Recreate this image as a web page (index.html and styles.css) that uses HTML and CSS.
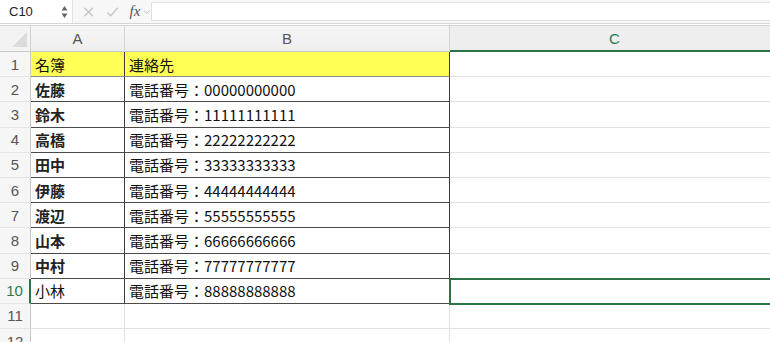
FILE: index.html
```html
<!DOCTYPE html>
<html lang="ja">
<head>
	<meta charset="UTF-8">
	<title>名簿</title>
	<link rel="stylesheet" href="styles.css">
</head>
<body>
	<!-- 数式バー -->
	<div class="bar">
		<div class="namebox">
			<span class="namebox-ref">C10</span>
			<span class="namebox-spin">
				<svg width="7" height="14" viewBox="0 0 7 14"><path d="M3.5 1 L6.5 5.5 L0.5 5.5 Z M3.5 13 L6.5 8.5 L0.5 8.5 Z" fill="#666"/></svg>
			</span>
		</div>
		<div class="bar-tools">
			<svg class="tool" width="12" height="12" viewBox="0 0 12 12"><path d="M1.5 1.5 L10.5 10.5 M10.5 1.5 L1.5 10.5" stroke="#c4c4c4" stroke-width="1.4" fill="none"/></svg>
			<svg class="tool" width="14" height="12" viewBox="0 0 14 12"><path d="M1.5 6.5 L5 10 L12.5 1.5" stroke="#c4c4c4" stroke-width="1.4" fill="none"/></svg>
			<span class="fx">fx</span>
			<svg class="chev" width="8" height="6" viewBox="0 0 8 6"><path d="M1 1.5 L4 4.5 L7 1.5" stroke="#bbb" stroke-width="1" fill="none"/></svg>
		</div>
		<div class="formula"></div>
	</div>

	<!-- シート -->
	<div class="sheet">
		<div class="corner"><span class="corner-tri"></span></div>
		<div class="colhead">A</div>
		<div class="colhead">B</div>
		<div class="colhead colhead-on">C</div>

		<div class="rowhead">1</div>
		<div class="cell yellow line-a">名簿</div>
		<div class="cell yellow line-b">連絡先</div>
		<div class="cell"></div>

		<div class="rowhead">2</div>
		<div class="cell name line-a">佐藤</div>
		<div class="cell line-b">電話番号：00000000000</div>
		<div class="cell"></div>

		<div class="rowhead">3</div>
		<div class="cell name line-a">鈴木</div>
		<div class="cell line-b">電話番号：11111111111</div>
		<div class="cell"></div>

		<div class="rowhead">4</div>
		<div class="cell name line-a">高橋</div>
		<div class="cell line-b">電話番号：22222222222</div>
		<div class="cell"></div>

		<div class="rowhead">5</div>
		<div class="cell name line-a">田中</div>
		<div class="cell line-b">電話番号：33333333333</div>
		<div class="cell"></div>

		<div class="rowhead">6</div>
		<div class="cell name line-a">伊藤</div>
		<div class="cell line-b">電話番号：44444444444</div>
		<div class="cell"></div>

		<div class="rowhead">7</div>
		<div class="cell name line-a">渡辺</div>
		<div class="cell line-b">電話番号：55555555555</div>
		<div class="cell"></div>

		<div class="rowhead">8</div>
		<div class="cell name line-a">山本</div>
		<div class="cell line-b">電話番号：66666666666</div>
		<div class="cell"></div>

		<div class="rowhead">9</div>
		<div class="cell name line-a">中村</div>
		<div class="cell line-b">電話番号：77777777777</div>
		<div class="cell"></div>

		<div class="rowhead rowhead-on">10</div>
		<div class="cell line-a">小林</div>
		<div class="cell line-b">電話番号：88888888888</div>
		<div class="cell selected"></div>

		<div class="rowhead">11</div>
		<div class="cell"></div>
		<div class="cell"></div>
		<div class="cell"></div>

		<div class="rowhead">12</div>
		<div class="cell"></div>
		<div class="cell"></div>
		<div class="cell"></div>
	</div>
</body>
</html>
```

FILE: styles.css
```css
body {
	margin: 0;
	background: #fff;
	font-family: "Liberation Sans", "Noto Sans CJK JP", sans-serif;
	overflow: hidden;
}

/* 数式バー */
.bar {
	height: 23px;
	display: flex;
	align-items: center;
	background: #f7f7f7;
	border-bottom: 1px solid #d6d6d6;
}
.namebox {
	width: 73px;
	height: 23px;
	box-sizing: border-box;
	display: flex;
	align-items: center;
	justify-content: space-between;
	padding: 0 4px 0 9px;
	background: #fff;
	border-right: 1px solid #e2e2e2;
}
.namebox-ref {
	font-size: 13px;
	color: #222;
}
.namebox-spin svg {
	display: block;
}
.bar-tools {
	display: flex;
	align-items: center;
	width: 78px;
	padding-left: 10px;
	box-sizing: border-box;
}
.tool {
	margin-right: 12px;
}
.fx {
	font-family: "Liberation Serif", serif;
	font-style: italic;
	font-size: 15px;
	color: #555;
	margin-left: -2px;
	margin-right: 3px;
}
.formula {
	flex: 1;
	height: 17px;
	background: #fff;
	border: 1px solid #e0e0e0;
	border-right: none;
}

/* シート（C列は画面外まで続く） */
.sheet {
	margin-top: 1px;
	border-top: 1px solid #d6d6d6;
	display: grid;
	grid-template-columns: 31px 94px 325px 330px;
	grid-template-rows: 26px repeat(12, 25.2px);
}
.sheet > div {
	box-sizing: border-box;
}
.corner {
	position: relative;
	background: #f3f3f3;
	border-right: 1px solid #d0d0d0;
	border-bottom: 1px solid #c8c8c8;
}
.corner-tri {
	position: absolute;
	right: 3px;
	bottom: 4px;
	width: 0;
	height: 0;
	border-left: 15px solid transparent;
	border-bottom: 15px solid #dcdcdc;
}
.colhead {
	display: flex;
	align-items: center;
	justify-content: center;
	background: linear-gradient(#f6f6f6, #eeeeee);
	border-right: 1px solid #d4d4d4;
	border-bottom: 1px solid #c8c8c8;
	font-size: 15px;
	color: #555;
}
.colhead-on {
	background: #eeeeee;
	color: #2c7a4b;
	border-bottom: 2px solid #2a7446;
}
.rowhead {
	display: flex;
	align-items: center;
	justify-content: center;
	background: #f6f6f6;
	border-right: 1px solid #c8c8c8;
	border-bottom: 1px solid #e4e4e4;
	font-size: 15px;
	color: #555;
}
.rowhead-on {
	color: #2c7a4b;
	border-right: 2px solid #2a7446;
}
.cell {
	display: flex;
	align-items: center;
	padding-left: 4px;
	border-right: 1px solid #e2e2e2;
	border-bottom: 1px solid #e2e2e2;
	font-family: "Noto Sans CJK JP", sans-serif;
	font-size: 15px;
	color: #111;
	white-space: nowrap;
}
.yellow {
	background: #ffff55;
}
.line-a,
.line-b {
	border-right-color: #3c3c3c;
	border-bottom-color: #4a4a4a;
}
.yellow.line-a,
.yellow.line-b {
	border-bottom-color: #8a8a8a;
}
.name {
	font-weight: 700;
	color: #222;
}
.selected {
	position: relative;
	z-index: 1;
	outline: 2px solid #2a7446;
	outline-offset: -1px;
}
```
